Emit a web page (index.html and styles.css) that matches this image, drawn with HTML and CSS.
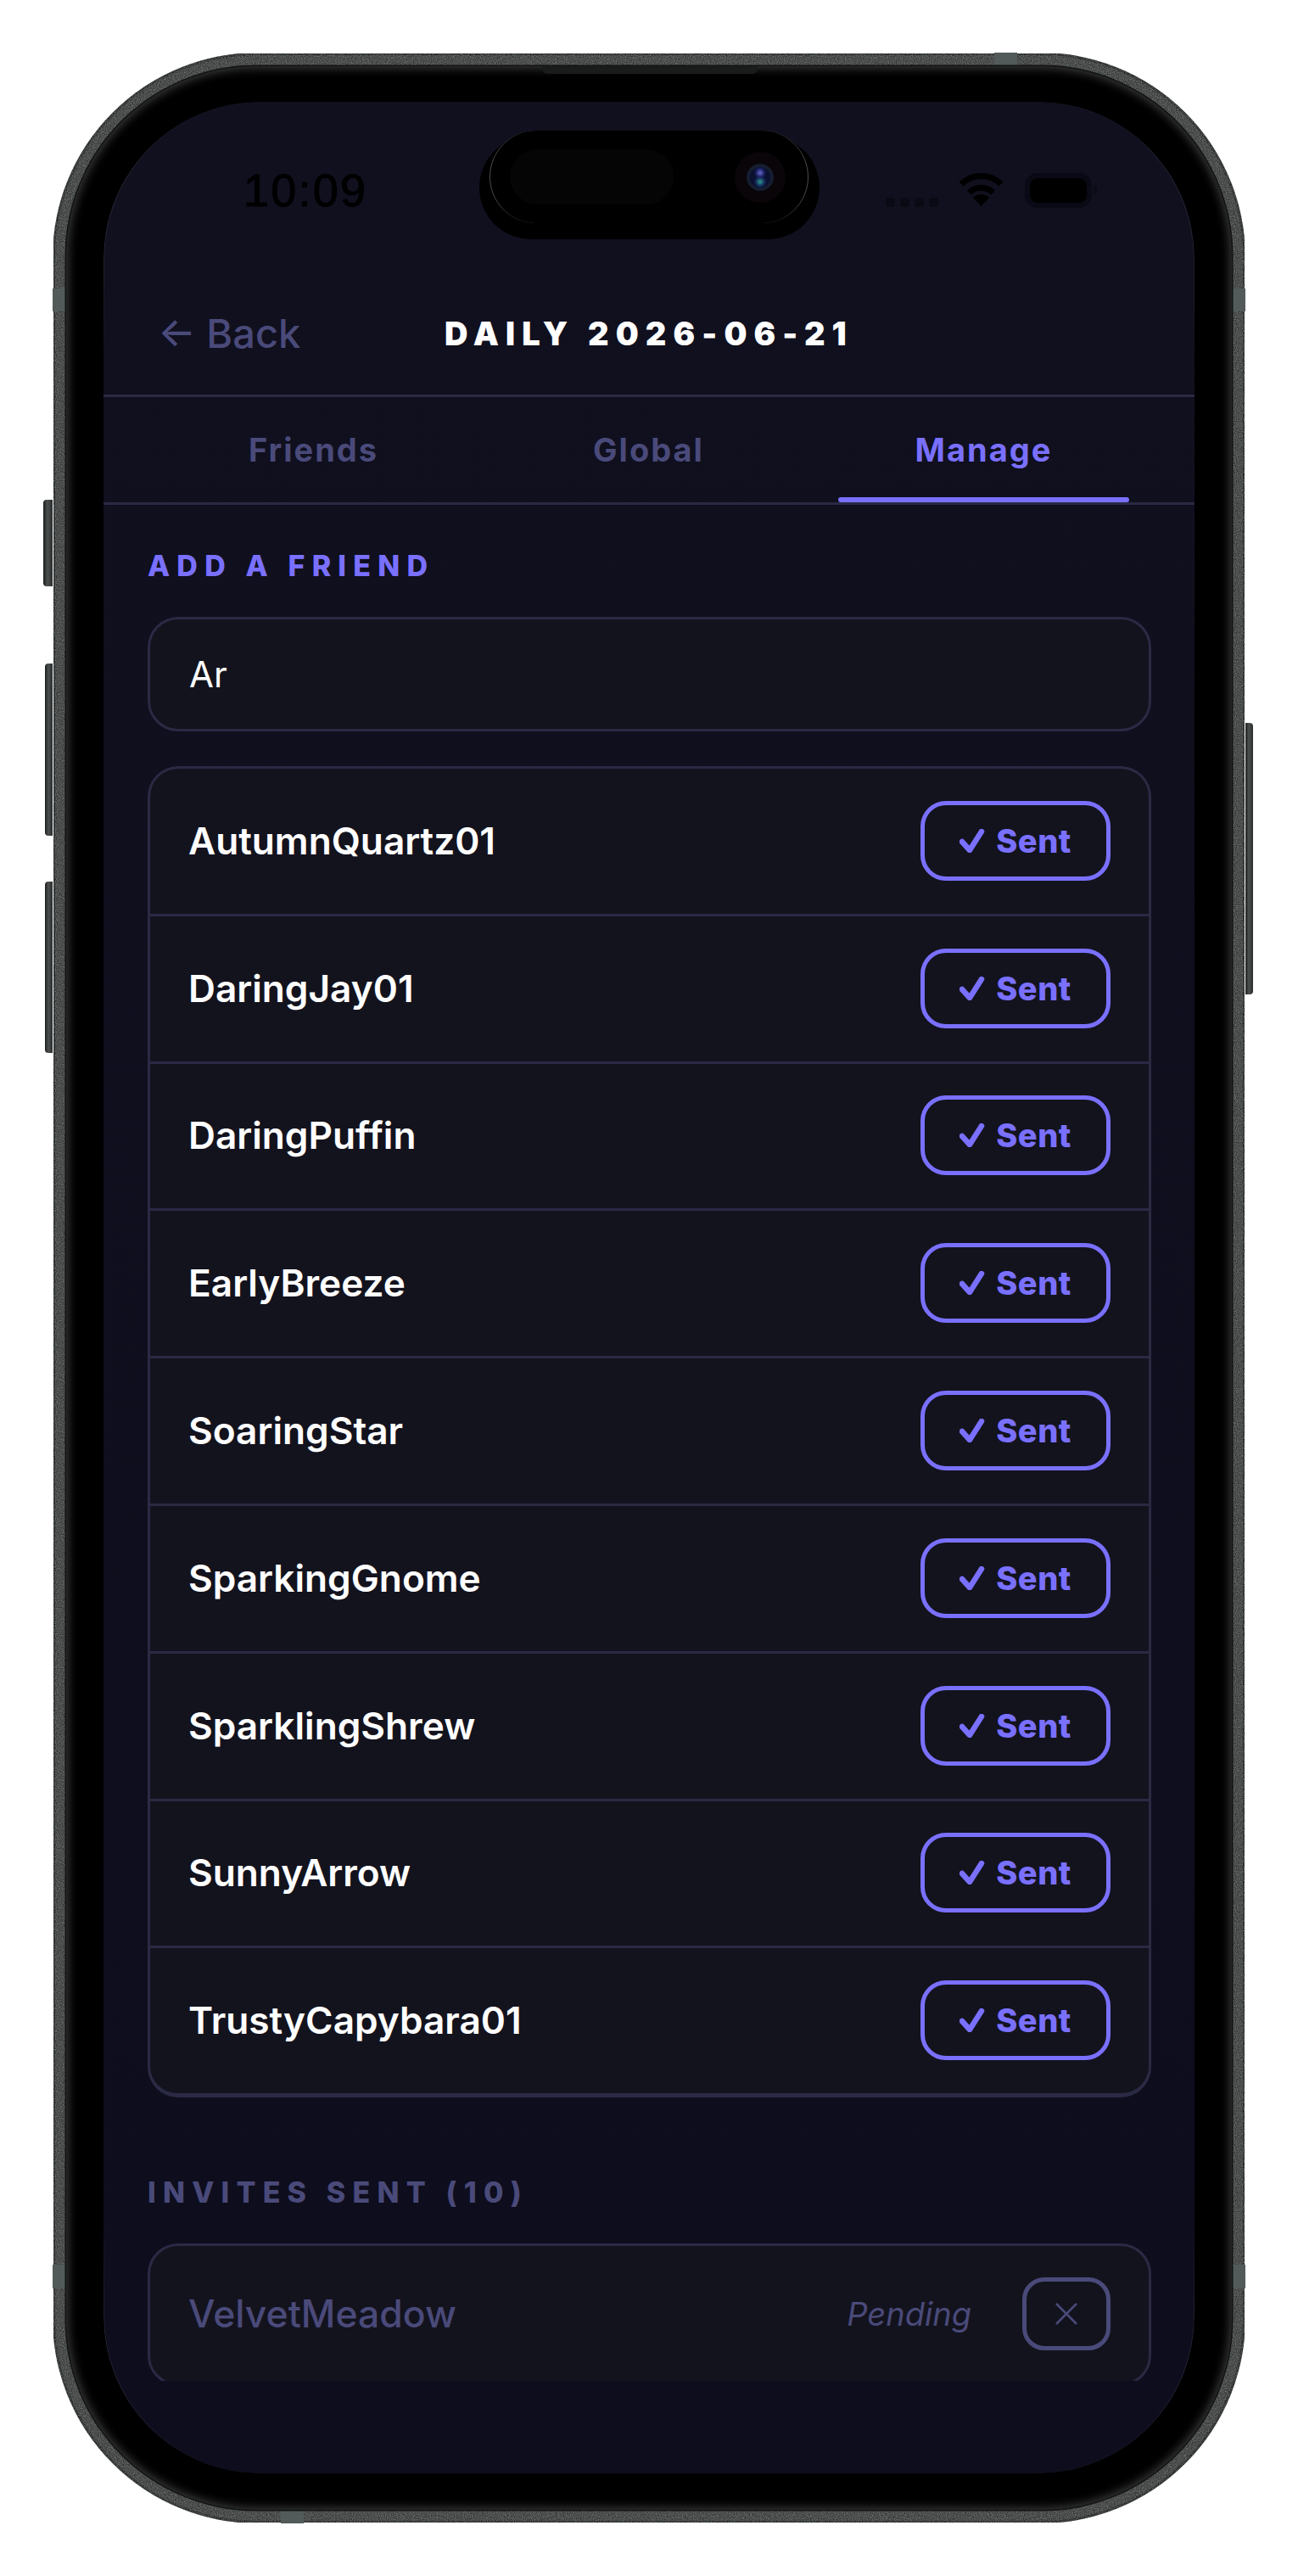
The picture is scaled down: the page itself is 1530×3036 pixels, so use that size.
FILE: index.html
```html
<!DOCTYPE html>
<html>
<head>
    <title>Daily 2026-06-21</title>
    <link rel="stylesheet" href="styles.css">
</head>

<body>
    <div class="phone">
        <svg class="metal" width="1406" height="2912">
            <defs>
                <filter id="grain" x="0" y="0" width="100%" height="100%" color-interpolation-filters="sRGB">
                    <feTurbulence type="fractalNoise" baseFrequency="0.9" numOctaves="2" seed="4" result="n"/>
                    <feColorMatrix in="n" type="matrix" values="0 0 0 0 0.6  0 0 0 0 0.61  0 0 0 0 0.61  1.1 0 0 0 -0.3"/>
                    <feComposite in2="SourceGraphic" operator="in" result="g"/>
                    <feMerge><feMergeNode in="SourceGraphic"/><feMergeNode in="g"/></feMerge>
                </filter>
            </defs>
            <rect x="1.5" y="1.5" width="1403" height="2909" rx="240" fill="#333535" stroke="#1d1f1f" stroke-width="3" filter="url(#grain)"/>
        </svg>

        <div class="side-btn btn-action"></div>
        <div class="side-btn btn-up"></div>
        <div class="side-btn btn-down"></div>
        <div class="side-btn btn-power"></div>

        <div class="antenna ant-left-top"></div>
        <div class="antenna ant-right-top"></div>
        <div class="antenna ant-left-low"></div>
        <div class="antenna ant-right-low"></div>
        <div class="antenna ant-top"></div>
        <div class="antenna ant-bottom"></div>

        <div class="bezel">
            <div class="speaker"></div>
            <div class="screen">

                <div class="status">
                    <span class="time">10:09</span>
                    <div class="status-right">
                        <div class="signal"><i></i><i></i><i></i><i></i></div>
                        <svg class="wifi" width="53" height="40" viewBox="0 0 53 40">
                            <path d="M3 13A33.6 33.6 0 0 1 50 13" fill="none" stroke="#000" stroke-width="7"/>
                            <path d="M12.4 23A20 20 0 0 1 40.6 23" fill="none" stroke="#000" stroke-width="7"/>
                            <path d="M26.5 39L17 29A13.5 13.5 0 0 1 36 29Z" fill="#000"/>
                        </svg>
                        <div class="battery"><div class="battery-fill"></div></div>
                        <div class="battery-cap"></div>
                    </div>
                </div>

                <div class="island">
                    <div class="island-top">
                        <div class="sensor"></div>
                        <div class="camera"><div class="lens"></div></div>
                    </div>
                </div>

                <div class="header">
                    <div class="back">← Back</div>
                    <div class="title">DAILY 2026-06-21</div>
                    <div></div>
                </div>

                <div class="tabs">
                    <div class="tab">Friends</div>
                    <div class="tab">Global</div>
                    <div class="tab active">Manage</div>
                </div>

                <div class="content">
                    <div class="label">ADD A FRIEND</div>
                    <div class="search">Ar</div>

                    <div class="card card-list">
                        <div class="row">
                            <span class="name">AutumnQuartz01</span>
                            <div class="sent"><svg class="check" width="30" height="28" viewBox="0 0 30 28"><path d="M3 15L12 25L26 3"/></svg>Sent</div>
                        </div>
                        <div class="row">
                            <span class="name">DaringJay01</span>
                            <div class="sent"><svg class="check" width="30" height="28" viewBox="0 0 30 28"><path d="M3 15L12 25L26 3"/></svg>Sent</div>
                        </div>
                        <div class="row">
                            <span class="name">DaringPuffin</span>
                            <div class="sent"><svg class="check" width="30" height="28" viewBox="0 0 30 28"><path d="M3 15L12 25L26 3"/></svg>Sent</div>
                        </div>
                        <div class="row">
                            <span class="name">EarlyBreeze</span>
                            <div class="sent"><svg class="check" width="30" height="28" viewBox="0 0 30 28"><path d="M3 15L12 25L26 3"/></svg>Sent</div>
                        </div>
                        <div class="row">
                            <span class="name">SoaringStar</span>
                            <div class="sent"><svg class="check" width="30" height="28" viewBox="0 0 30 28"><path d="M3 15L12 25L26 3"/></svg>Sent</div>
                        </div>
                        <div class="row">
                            <span class="name">SparkingGnome</span>
                            <div class="sent"><svg class="check" width="30" height="28" viewBox="0 0 30 28"><path d="M3 15L12 25L26 3"/></svg>Sent</div>
                        </div>
                        <div class="row">
                            <span class="name">SparklingShrew</span>
                            <div class="sent"><svg class="check" width="30" height="28" viewBox="0 0 30 28"><path d="M3 15L12 25L26 3"/></svg>Sent</div>
                        </div>
                        <div class="row">
                            <span class="name">SunnyArrow</span>
                            <div class="sent"><svg class="check" width="30" height="28" viewBox="0 0 30 28"><path d="M3 15L12 25L26 3"/></svg>Sent</div>
                        </div>
                        <div class="row">
                            <span class="name">TrustyCapybara01</span>
                            <div class="sent"><svg class="check" width="30" height="28" viewBox="0 0 30 28"><path d="M3 15L12 25L26 3"/></svg>Sent</div>
                        </div>
                    </div>

                    <div class="label label-muted">INVITES SENT (10)</div>
                    <div class="card">
                        <div class="row row-invite">
                            <span class="name name-muted">VelvetMeadow</span>
                            <span class="pending">Pending</span>
                            <div class="cancel"><svg width="28" height="26" viewBox="0 0 28 26"><path d="M2 1L26 25M26 1L2 25"/></svg></div>
                        </div>
                    </div>
                </div>

            </div>
        </div>
    </div>
</body>
</html>
```

FILE: styles.css
```css
* {
    box-sizing: border-box;
}

body {
    margin: 0;
    padding: 62px;
    height: 3036px;
    overflow: hidden;
    background: #fff;
    font-family: Inter, "Liberation Sans", sans-serif;
}

/* device frame */
.phone {
    position: relative;
    width: 1406px;
    height: 2912px;
    padding: 16px;
    border-radius: 240px;
}

.metal {
    position: absolute;
    left: 0;
    top: 0;
}

.side-btn {
    position: absolute;
    background: linear-gradient(90deg, #1d1f1f, #4c5050 45%, #2a2c2c);
    border-radius: 4px 0 0 4px;
}

.btn-action {
    left: -11px;
    top: 527px;
    width: 11px;
    height: 102px;
}

.btn-up {
    left: -9px;
    top: 720px;
    width: 9px;
    height: 203px;
}

.btn-down {
    left: -9px;
    top: 977px;
    width: 9px;
    height: 202px;
}

.btn-power {
    right: -9px;
    top: 790px;
    width: 9px;
    height: 320px;
    border-radius: 0 4px 4px 0;
}

.antenna {
    position: absolute;
    background: #535a5a;
}

.ant-left-top {
    left: 0;
    top: 278px;
    width: 16px;
    height: 27px;
}

.ant-right-top {
    right: 0;
    top: 278px;
    width: 16px;
    height: 27px;
}

.ant-left-low {
    left: 0;
    top: 2607px;
    width: 16px;
    height: 28px;
}

.ant-right-low {
    right: 0;
    top: 2607px;
    width: 16px;
    height: 28px;
}

.ant-top {
    right: 269px;
    top: 0;
    width: 27px;
    height: 15px;
}

.ant-bottom {
    left: 269px;
    bottom: 0;
    width: 27px;
    height: 15px;
}

.bezel {
    position: relative;
    height: 100%;
    padding: 42px 44px 43px;
    background: #000;
    border-radius: 224px;
    box-shadow: 0 0 0 1.5px #121414, inset 0 0 12px 2px rgba(90, 90, 90, 0.7);
}

.speaker {
    position: absolute;
    left: 561px;
    top: 0;
    width: 254px;
    height: 9px;
    background: #1a1c1c;
    border-radius: 0 0 6px 6px;
}

.screen {
    position: relative;
    display: flex;
    flex-direction: column;
    height: 100%;
    padding-bottom: 109px;
    overflow: hidden;
    background: linear-gradient(#10101f, #0d0d1d);
    border-radius: 185px;
}

/* hairline on the glass corners */
.screen::after {
    content: "";
    position: absolute;
    inset: 0;
    border-left: 1px solid rgba(255, 255, 255, 0.2);
    border-right: 1px solid rgba(255, 255, 255, 0.2);
    border-radius: 185px;
    -webkit-mask-image: linear-gradient(#000 0, transparent 300px, transparent calc(100% - 300px), #000 100%);
    mask-image: linear-gradient(#000 0, transparent 300px, transparent calc(100% - 300px), #000 100%);
}

/* status bar */
.status {
    display: flex;
    justify-content: space-between;
    align-items: center;
    flex: none;
    height: 200px;
    padding: 65px 115px 57px 165px;
}

.time {
    font-family: "Liberation Sans", sans-serif;
    font-size: 54px;
    line-height: 78px;
    letter-spacing: 2.2px;
    color: #000;
    -webkit-text-stroke: 1px #000;
}

.status-right {
    display: flex;
    align-items: center;
    height: 41px;
}

.signal {
    display: flex;
    align-self: flex-end;
    gap: 6px;
    margin: 0 24px 1px 0;
}

.signal i {
    width: 11px;
    height: 11px;
    background: #0a0a14;
    border-radius: 4px;
}

.wifi {
    margin-right: 25px;
}

.battery {
    width: 79px;
    height: 41px;
    padding: 5px 5px;
    border: 1px solid #0a0a14;
    background: #0a0a16;
    border-radius: 15px;
}

.battery-fill {
    height: 100%;
    background: #000;
    border-radius: 9px;
}

.battery-cap {
    width: 4px;
    height: 12px;
    margin-left: 2px;
    background: #0a0a16;
    border-radius: 0 4px 4px 0;
}

/* dynamic island */
.island {
    position: absolute;
    left: 443px;
    top: 40px;
    width: 401px;
    height: 122px;
    background: #000;
    border-radius: 61px;
}

.island-top {
    position: absolute;
    left: 12px;
    top: -6px;
    display: flex;
    justify-content: space-between;
    align-items: center;
    width: 376px;
    height: 109px;
    padding: 0 26px 0 23px;
    background: #000;
    border-left: 1px solid #4c4c4c;
    border-right: 1px solid #4c4c4c;
    border-radius: 55px;
}

.sensor {
    width: 193px;
    height: 65px;
    background: #050505;
    border-radius: 33px;
}

.camera {
    display: flex;
    justify-content: center;
    align-items: center;
    width: 60px;
    height: 60px;
    background: #090508;
    border-radius: 50%;
}

.lens {
    width: 32px;
    height: 32px;
    background: radial-gradient(circle at 50% 28%, #6a68c8 0, #1c2468 22%, transparent 34%), radial-gradient(circle at 50% 72%, #2a9a88 0, #142a5a 24%, transparent 36%), #0a1030;
    border: 4px solid #161d30;
    border-radius: 50%;
}

/* header and tabs */
.header {
    display: grid;
    grid-template-columns: 1fr auto 1fr;
    align-items: center;
    flex: none;
    height: 148px;
    border-bottom: 3px solid #2a2a44;
}

.back {
    padding-left: 64px;
    font-size: 47px;
    font-weight: 500;
    color: #4a4a7a;
}

.title {
    font-size: 38px;
    font-weight: 900;
    letter-spacing: 8.1px;
    color: #fff;
}

.tabs {
    display: flex;
    gap: 52px;
    flex: none;
    height: 126.5px;
    padding-left: 76px;
    border-bottom: 3px solid #2a2a44;
}

.tab {
    position: relative;
    display: flex;
    justify-content: center;
    align-items: center;
    width: 343px;
    font-size: 38px;
    font-weight: 700;
    letter-spacing: 2px;
    color: #4a4a7a;
}

.tab.active {
    color: #7a70ff;
}

.tab.active::after {
    content: "";
    position: absolute;
    left: 0;
    right: 0;
    bottom: 0;
    height: 6px;
    background: #7a70ff;
    border-radius: 3px;
}

/* scrolling part */
.content {
    flex: 1;
    min-height: 0;
    padding: 52.5px 51px 0 52px;
    overflow: hidden;
}

.label {
    height: 40px;
    font-size: 34px;
    line-height: 40px;
    font-weight: 800;
    letter-spacing: 8.2px;
    color: #7a70ff;
}

.label-muted {
    margin: 92.5px 0 39.5px;
    color: #4a4a7a;
}

.search {
    display: flex;
    align-items: center;
    height: 135px;
    margin: 40px 0 41px;
    padding-left: 46px;
    font-size: 42px;
    color: #fff;
    background: #13131e;
    border: 3px solid #2a2a44;
    border-radius: 36px;
}

.card {
    background: #13131e;
    border: 3px solid #2a2a44;
    border-radius: 36px;
}

.card-list {
    border-bottom-width: 5px;
}

.row {
    display: flex;
    align-items: center;
    height: 173.8px;
    padding: 0 45px 1px;
    border-bottom: 3px solid #2a2a44;
}

.row:last-child {
    height: 170.6px;
    border-bottom: 0;
}

.row-invite:last-child {
    height: 162px;
}

.name {
    flex: 1;
    font-size: 44.2px;
    font-weight: 600;
    color: #fff;
}

.name-muted {
    font-size: 44.5px;
    font-weight: 500;
    color: #4a4a7a;
}

.sent {
    display: flex;
    justify-content: center;
    align-items: center;
    gap: 13px;
    width: 224px;
    height: 94px;
    font-size: 38px;
    font-weight: 800;
    letter-spacing: 0.5px;
    color: #7a70ff;
    border: 5.5px solid #7a70ff;
    border-radius: 30px;
}

.check path {
    fill: none;
    stroke: #7a70ff;
    stroke-width: 6.5;
    stroke-linecap: round;
    stroke-linejoin: round;
}

.pending {
    margin-right: 60px;
    font-size: 38px;
    font-style: italic;
    color: #4a4a7a;
}

.cancel {
    display: flex;
    justify-content: center;
    align-items: center;
    width: 104px;
    height: 86px;
    border: 5px solid #4a4a7a;
    border-radius: 26px;
}

.cancel path {
    fill: none;
    stroke: #4a4a7a;
    stroke-width: 2.5;
}
```
